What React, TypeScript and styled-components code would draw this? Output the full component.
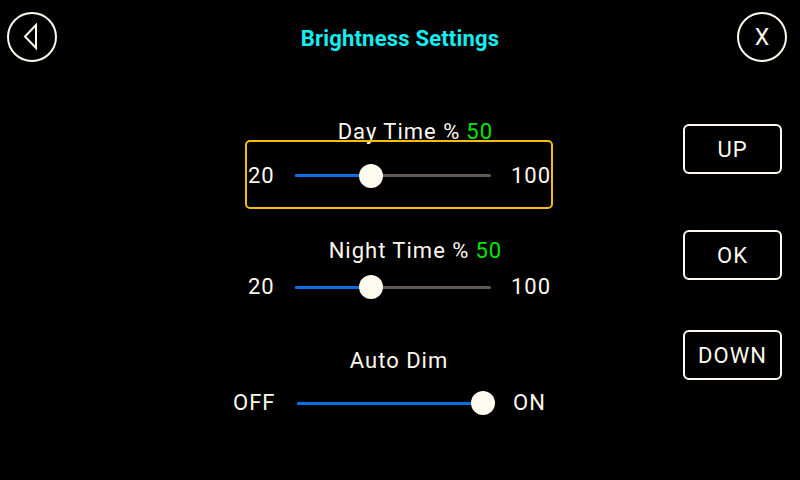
import styled, { createGlobalStyle } from "styled-components";

const CREAM = "#fff9ee";
const BLUE = "#0a6fe0";

const GlobalStyle = createGlobalStyle`
  html, body {
    margin: 0;
    padding: 0;
    background: #000;
  }
  body {
    width: 800px;
    height: 480px;
    overflow: hidden;
    font-family: Roboto, "Liberation Sans", sans-serif;
    color: ${CREAM};
  }
`;

interface SliderProps {
  min: number;
  max: number;
  value: number;
}

const Slider = ({ min, max, value }: SliderProps) => {
  const frac = (value - min) / (max - min);
  const pos = `calc(8px + (100% - 16px) * ${frac})`;
  return (
    <Track>
      <Fill style={{ width: pos }} />
      <Thumb style={{ left: pos }} />
    </Track>
  );
};

const App = () => {
  return (
    <Screen>
      <GlobalStyle />
      <Header>
        <RoundButton aria-label="back">
          <svg width="16" height="28" viewBox="0 0 16 28">
            <path
              d="M13 2 L2 13.5 L13 25 Z"
              fill="none"
              stroke={CREAM}
              strokeWidth="2"
              strokeLinejoin="miter"
            />
          </svg>
        </RoundButton>
        <Title>Brightness Settings</Title>
        <RoundButton $end aria-label="close">
          X
        </RoundButton>
      </Header>

      <Main>
        <Controls>
          <Label $top={58} $bottom={-4}>
            <span />
            <LabelText>Day Time %</LabelText>
            <Value>50</Value>
          </Label>
          <SelectedBox>
            <SliderRow>
              <MinMax>20</MinMax>
              <Slider min={20} max={100} value={50} />
              <MinMax>100</MinMax>
            </SliderRow>
          </SelectedBox>

          <Label $top={30} $bottom={-2}>
            <span />
            <LabelText>Night Time %</LabelText>
            <Value>50</Value>
          </Label>
          <PlainRow>
            <SliderRow>
              <MinMax>20</MinMax>
              <Slider min={20} max={100} value={50} />
              <MinMax>100</MinMax>
            </SliderRow>
          </PlainRow>

          <Label $top={50} $bottom={-2}>
            <span />
            <LabelText>Auto Dim</LabelText>
            <span />
          </Label>
          <ToggleRow>
            <MinMax $right>OFF</MinMax>
            <Slider min={0} max={1} value={1} />
            <MinMax>ON</MinMax>
          </ToggleRow>
        </Controls>

        <Buttons>
          <NavButton $top={62}>UP</NavButton>
          <NavButton $top={56}>OK</NavButton>
          <NavButton $top={50}>DOWN</NavButton>
        </Buttons>
      </Main>
    </Screen>
  );
};

export default App;

const Screen = styled.div`
  width: 800px;
  height: 480px;
  background: #000;
  display: flex;
  flex-direction: column;
`;

const Header = styled.header`
  display: grid;
  grid-template-columns: 1fr auto 1fr;
  align-items: center;
  padding: 12px 7px 0 7px;
`;

const RoundButton = styled.button<{ $end?: boolean }>`
  justify-self: ${({ $end }) => ($end ? "end" : "start")};
  margin-right: ${({ $end }) => ($end ? "6px" : "0")};
  width: 50px;
  height: 50px;
  box-sizing: border-box;
  border: 2px solid ${CREAM};
  border-radius: 50%;
  background: transparent;
  color: ${CREAM};
  font-family: Roboto, "Liberation Sans", sans-serif;
  font-size: 23px;
  display: flex;
  align-items: center;
  justify-content: center;
  padding: 0;
  cursor: pointer;

  svg {
    margin-left: -3px;
  }
`;

const Title = styled.h1`
  margin: 2px 0 0;
  font-size: 22px;
  font-weight: 700;
  color: #12eef2;
  letter-spacing: 0.2px;
`;

const Main = styled.main`
  display: flex;
  flex: 1;
`;

const Controls = styled.section`
  width: 308px;
  margin-left: 245px;
  display: flex;
  flex-direction: column;
`;

const Label = styled.div<{ $top: number; $bottom: number }>`
  display: grid;
  grid-template-columns: 1fr auto 1fr;
  column-gap: 6px;
  margin-top: ${({ $top }) => $top}px;
  margin-bottom: ${({ $bottom }) => $bottom}px;
  font-size: 22px;
  line-height: 24px;
  letter-spacing: 1px;
`;

const LabelText = styled.span`
  color: ${CREAM};
`;

const Value = styled.span`
  color: #00e600;
`;

const SelectedBox = styled.div`
  height: 69px;
  box-sizing: border-box;
  border: 2px solid #f6be0b;
  border-radius: 5px;
  display: flex;
  align-items: center;
  padding: 2px 1px 0;
`;

const PlainRow = styled.div`
  margin-top: 14px;
  padding: 0 3px;
`;

const SliderRow = styled.div`
  display: grid;
  grid-template-columns: 27px 196px auto;
  column-gap: 20px;
  align-items: center;
  height: 24px;
  width: 100%;
`;

const ToggleRow = styled.div`
  display: grid;
  grid-template-columns: 42px 194px auto;
  column-gap: 22px;
  align-items: center;
  height: 24px;
  margin-top: 20px;
  margin-left: -12px;
`;

const MinMax = styled.span<{ $right?: boolean }>`
  font-size: 22px;
  line-height: 24px;
  letter-spacing: 1px;
  text-align: ${({ $right }) => ($right ? "right" : "left")};
  white-space: nowrap;
`;

const Track = styled.div`
  position: relative;
  height: 3px;
  border-radius: 2px;
  background: #5f5852;
`;

const Fill = styled.div`
  height: 100%;
  border-radius: 2px;
  background: ${BLUE};
`;

const Thumb = styled.div`
  position: absolute;
  top: 50%;
  width: 24px;
  height: 24px;
  border-radius: 50%;
  background: ${CREAM};
  transform: translate(-50%, -50%);
`;

const Buttons = styled.nav`
  margin-left: auto;
  margin-right: 18px;
  display: flex;
  flex-direction: column;
`;

const NavButton = styled.button<{ $top: number }>`
  margin-top: ${({ $top }) => $top}px;
  width: 99px;
  height: 50px;
  box-sizing: border-box;
  border: 2px solid ${CREAM};
  border-radius: 6px;
  background: transparent;
  color: ${CREAM};
  font-family: Roboto, "Liberation Sans", sans-serif;
  font-size: 22px;
  letter-spacing: 1px;
  cursor: pointer;
`;
